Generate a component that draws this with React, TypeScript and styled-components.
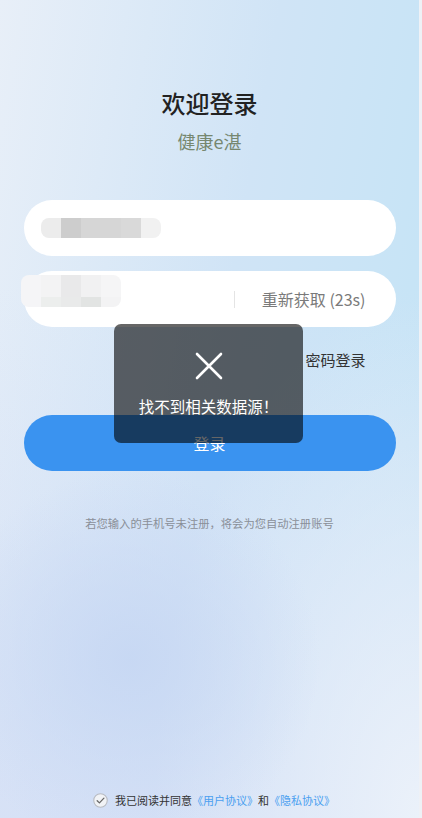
import React from 'react';
import styled, { createGlobalStyle } from 'styled-components';

const GlobalStyle = createGlobalStyle`
  html, body {
    margin: 0;
    padding: 0;
  }
  body {
    font-family: "Noto Sans CJK SC", "Noto Sans", sans-serif;
    background: #eef2f7;
  }
`;

const Shell = styled.div`
  display: flex;
  width: 422px;
  height: 818px;
  overflow: hidden;
`;

const Page = styled.div`
  position: relative;
  width: 419px;
  height: 818px;
  display: flex;
  flex-direction: column;
  align-items: center;
  background:
    radial-gradient(circle at 130px 660px, rgba(198, 215, 243, 0.9) 0, rgba(198, 215, 243, 0) 190px),
    radial-gradient(ellipse at 100% 100%, rgba(236, 242, 250, 0.95) 0, rgba(236, 242, 250, 0) 45%),
    linear-gradient(to bottom, rgba(214, 224, 246, 0) 35%, rgba(214, 224, 246, 0.85) 100%),
    linear-gradient(100deg, #e8eff8 0%, #d0e4f6 50%, #c2e4f6 100%);
`;

const EdgeStrip = styled.div`
  width: 3px;
  height: 818px;
  background: #eef1f6;
`;

const Title = styled.h1`
  margin: 86px 0 0;
  font-size: 24px;
  line-height: 34px;
  font-weight: 500;
  color: #222;
`;

const Subtitle = styled.div`
  margin-top: 8px;
  font-size: 18px;
  line-height: 26px;
  color: #76876f;
`;

const Form = styled.div`
  margin-top: 46px;
  width: 372px;
  display: flex;
  flex-direction: column;
`;

const Field = styled.div<{ $gap?: number }>`
  height: 56px;
  margin-top: ${(p) => p.$gap ?? 0}px;
  border-radius: 28px;
  background: #fff;
  display: flex;
  align-items: center;
  padding: 0 30px 0 17px;
  box-sizing: border-box;
`;

const Mosaic = styled.div<{ $shift?: number; $top?: number }>`
  display: grid;
  grid-auto-flow: column;
  margin-left: ${(p) => p.$shift ?? 0}px;
  margin-top: ${(p) => p.$top ?? 0}px;
  border-radius: 8px;
  overflow: hidden;
`;

const Tile = styled.div<{ $c: string; $w: number; $h: number }>`
  width: ${(p) => p.$w}px;
  height: ${(p) => p.$h}px;
  background: ${(p) => p.$c};
`;

const Column = styled.div`
  display: flex;
  flex-direction: column;
`;

const Divider = styled.div`
  width: 1px;
  height: 17px;
  background: #e4e4e4;
  margin-left: auto;
`;

const Resend = styled.div`
  margin-left: 27px;
  font-size: 16px;
  color: #7a7a7a;
  white-space: nowrap;
`;

const SwitchRow = styled.div`
  display: flex;
  justify-content: flex-end;
  padding: 22px 30px 0 0;
  height: 88px;
  box-sizing: border-box;
`;

const SwitchLink = styled.div`
  font-size: 15px;
  line-height: 22px;
  color: #333;
`;

const LoginButton = styled.div`
  height: 56px;
  border-radius: 28px;
  background: #3a93f0;
  color: #fff;
  font-size: 16px;
  display: flex;
  align-items: center;
  justify-content: center;
`;

const Hint = styled.div`
  margin-top: 44px;
  font-size: 11.3px;
  line-height: 16px;
  color: #8a8f98;
`;

const Footer = styled.div`
  margin: auto 0 10px 9px;
  display: flex;
  align-items: center;
  gap: 7px;
  font-size: 11px;
  line-height: 16px;
  color: #333;
`;

const Link = styled.span`
  color: #4a9ff0;
`;

const Toast = styled.div`
  position: absolute;
  left: 114px;
  top: 324px;
  width: 189px;
  height: 119px;
  border-radius: 7px;
  background: rgba(0, 0, 0, 0.6);
  display: flex;
  flex-direction: column;
  align-items: center;
  box-sizing: border-box;
  padding-top: 28px;
`;

const ToastText = styled.div`
  margin-top: 15px;
  font-size: 15.5px;
  line-height: 22px;
  color: #fff;
`;

const CloseIcon = () => (
  <svg width="28" height="28" viewBox="0 0 28 28">
    <path d="M2 2 L26 26 M26 2 L2 26" stroke="#fff" strokeWidth="2.6" strokeLinecap="round" />
  </svg>
);

const CheckCircle = () => (
  <svg width="15" height="15" viewBox="0 0 14 14">
    <circle cx="7" cy="7" r="6.3" fill="#f1f3f6" stroke="#b9bcc2" strokeWidth="1" />
    <path d="M3.9 7.2 L6 9.2 L10.2 4.8" fill="none" stroke="#666" strokeWidth="1.2" strokeLinecap="round" strokeLinejoin="round" />
  </svg>
);

const phoneTiles = [
  { c: '#ececec', w: 20 },
  { c: '#cdcdcd', w: 20 },
  { c: '#d6d6d6', w: 40 },
  { c: '#d9d9d9', w: 20 },
  { c: '#f1f1f1', w: 20 },
];

const codeTop = ['#f5f5f7', '#f3f3f4', '#e9e9ea', '#f1f1f2', '#f5f5f6'];
const codeBottom = ['#f5f5f7', '#eceeed', '#e9eaea', '#e2e4e3', '#f3f3f4'];

export default function App() {
  return (
    <>
      <GlobalStyle />
      <Shell>
        <Page>
          <Title>欢迎登录</Title>
          <Subtitle>健康e湛</Subtitle>
          <Form>
            <Field>
              <Mosaic>
                {phoneTiles.map((t, i) => (
                  <Tile key={i} $c={t.c} $w={t.w} $h={20} />
                ))}
              </Mosaic>
            </Field>
            <Field $gap={15}>
              <Mosaic $shift={-20} $top={-16}>
                {codeTop.map((c, i) => (
                  <Column key={i}>
                    <Tile $c={c} $w={20} $h={22} />
                    <Tile $c={codeBottom[i]} $w={20} $h={10} />
                  </Column>
                ))}
              </Mosaic>
              <Divider />
              <Resend>重新获取 (23s)</Resend>
            </Field>
            <SwitchRow>
              <SwitchLink>密码登录</SwitchLink>
            </SwitchRow>
            <LoginButton>登录</LoginButton>
          </Form>
          <Hint>若您输入的手机号未注册，将会为您自动注册账号</Hint>
          <Footer>
            <CheckCircle />
            <span>
              我已阅读并同意<Link>《用户协议》</Link>和<Link>《隐私协议》</Link>
            </span>
          </Footer>
          <Toast>
            <CloseIcon />
            <ToastText>找不到相关数据源！</ToastText>
          </Toast>
        </Page>
        <EdgeStrip />
      </Shell>
    </>
  );
}
